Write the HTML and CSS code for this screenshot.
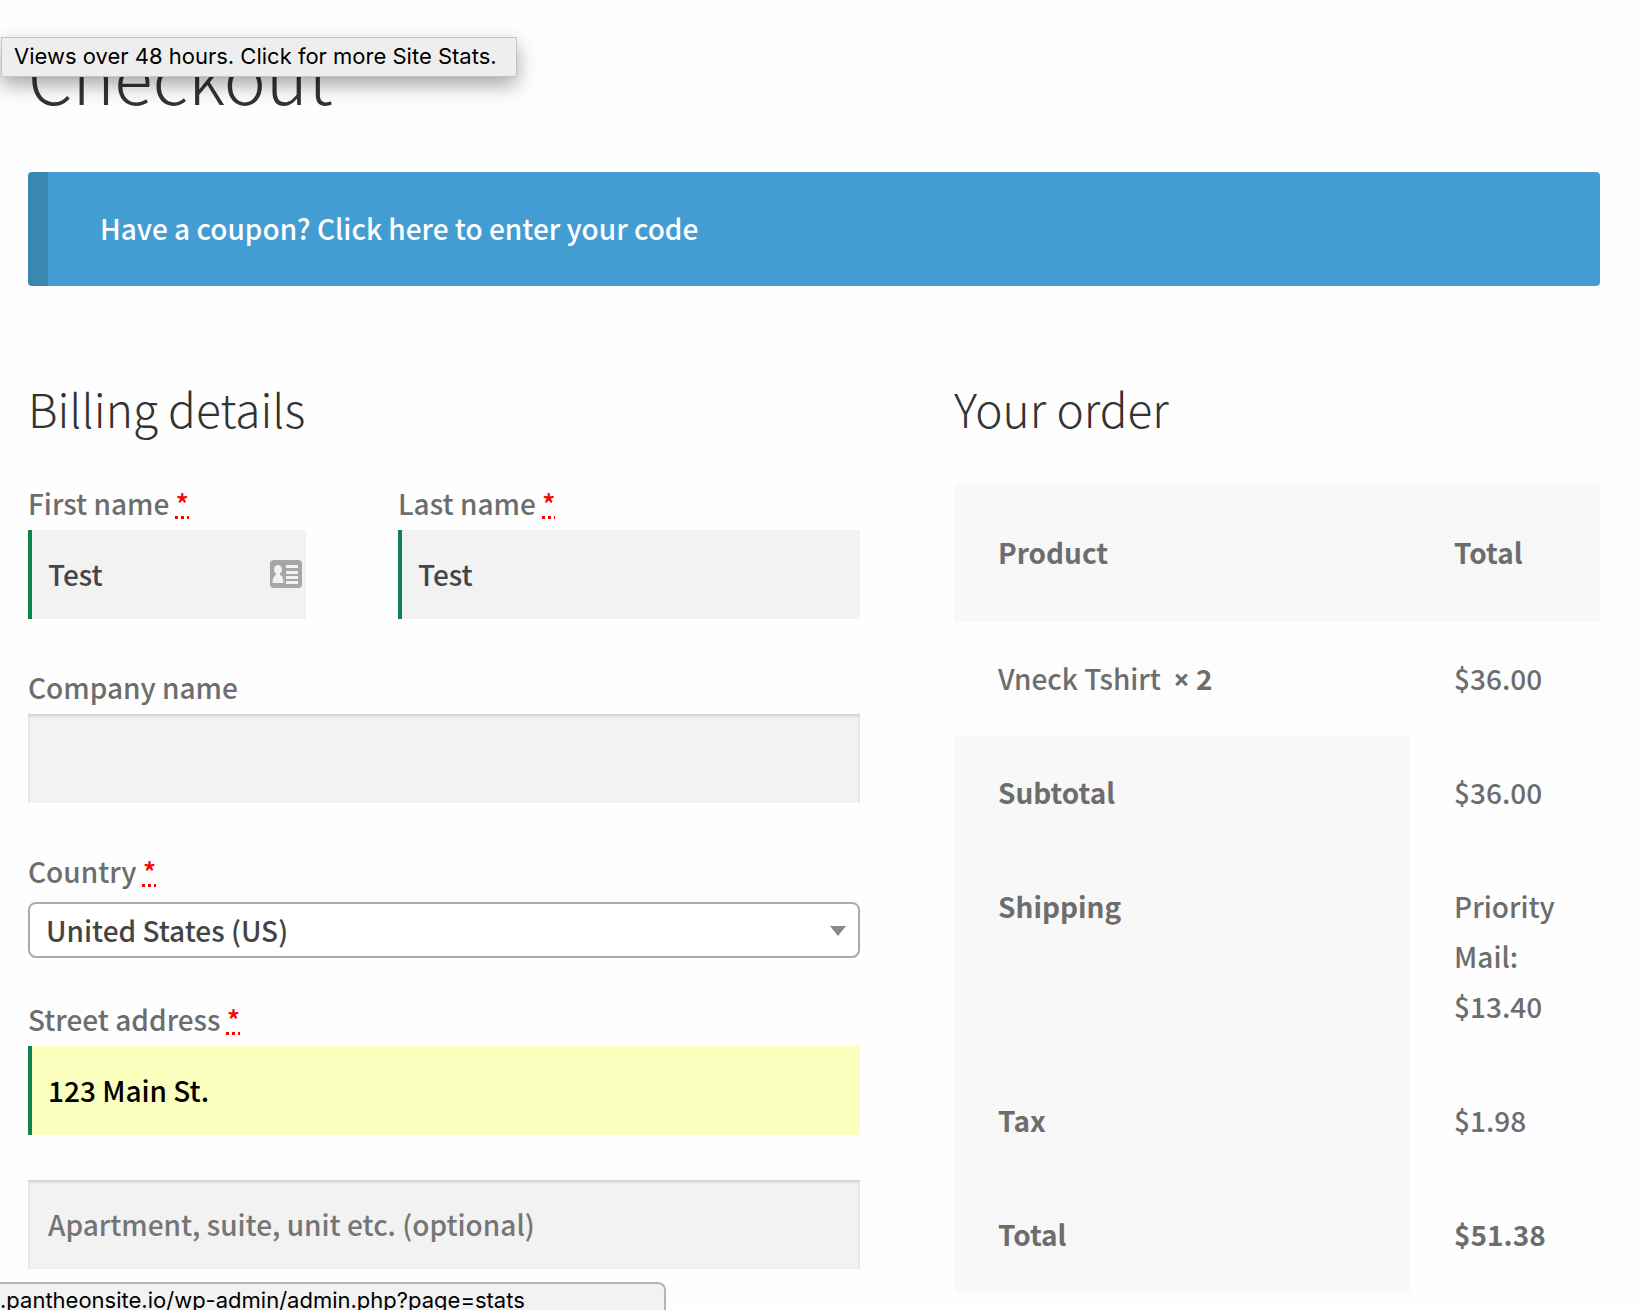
FILE: index.html
```html
<!DOCTYPE html>
<html lang="en">
<head>
<meta charset="utf-8">
<title>Checkout</title>
<link rel="stylesheet" href="styles.css">
</head>
<body>
<main class="page">
  <h1 class="page-title">Checkout</h1>
  <div class="tooltip" role="tooltip">Views over 48 hours. Click for more Site Stats.</div>

  <div class="notice">Have a coupon? <a class="notice-link" href="#coupon">Click here to enter your code</a></div>

  <form class="checkout">
    <section class="billing">
      <h2 class="section-title">Billing details</h2>
      <div class="name-row">
        <div class="field">
          <label class="label" for="first">First name <abbr class="required" title="required">*</abbr></label>
          <div class="control">
            <input class="input input-valid" id="first" type="text" value="Test">
            <svg class="card-icon" viewBox="0 0 32 28" aria-hidden="true">
              <rect width="32" height="28" rx="4" fill="#a6a6a6"/>
              <ellipse cx="8" cy="9.500" rx="4" ry="4.500" fill="#f2f2f2"/>
              <path d="M6 12h4v3c2.500 1 3.500 4 3.500 8h-11c0-4 1-7 3.500-8z" fill="#f2f2f2"/>
              <path d="M16 5h12v3H16zM16 11h12v3H16zM16 16h12v3H16zM16 21h12v3H16z" fill="#f2f2f2"/>
            </svg>
          </div>
        </div>
        <div class="field">
          <label class="label" for="last">Last name <abbr class="required" title="required">*</abbr></label>
          <input class="input input-valid" id="last" type="text" value="Test">
        </div>
      </div>
      <div class="field">
        <label class="label" for="company">Company name</label>
        <input class="input" id="company" type="text">
      </div>
      <div class="field field-select">
        <label class="label" for="country">Country <abbr class="required" title="required">*</abbr></label>
        <div class="control select-control">
          <select class="select" id="country"><option>United States (US)</option></select>
        </div>
      </div>
      <div class="field">
        <label class="label" for="street">Street address <abbr class="required" title="required">*</abbr></label>
        <input class="input input-valid input-autofill" id="street" type="text" value="123 Main St.">
      </div>
      <div class="field">
        <input class="input" type="text" aria-label="Apartment, suite, unit etc." placeholder="Apartment, suite, unit etc. (optional)">
      </div>
    </section>

    <section class="order">
      <h2 class="section-title">Your order</h2>
      <table class="order-table">
        <colgroup><col class="col-product"><col></colgroup>
        <thead>
          <tr><th scope="col">Product</th><th scope="col">Total</th></tr>
        </thead>
        <tbody>
          <tr><td>Vneck Tshirt&nbsp; <strong><span class="times">×</span> 2</strong></td><td>$36.00</td></tr>
        </tbody>
        <tfoot>
          <tr><th scope="row">Subtotal</th><td>$36.00</td></tr>
          <tr><th scope="row">Shipping</th><td>Priority Mail: $13.40</td></tr>
          <tr><th scope="row">Tax</th><td>$1.98</td></tr>
          <tr><th scope="row">Total</th><td><strong>$51.38</strong></td></tr>
        </tfoot>
      </table>
    </section>
  </form>
</main>
<div class="status-bar">.pantheonsite.io/wp-admin/admin.php?page=stats</div>
</body>
</html>
```
FILE: styles.css
```css
* {
  box-sizing: border-box;
}

body {
  margin: 0;
  background: #fefefe;
  color: #6d6d6d;
  font-family: "Noto Sans CJK SC", "Noto Sans", sans-serif;
  font-size: 28px;
  font-weight: 500;
  line-height: 50px;
}

.page {
  position: relative;
  padding: 28px 44px 18px 28px;
}

.page-title,
.section-title {
  margin: 0;
  color: #333;
  font-weight: 300;
}

.page-title {
  margin-bottom: 52px;
  font-size: 71px;
  line-height: 92px;
}

.tooltip {
  position: absolute;
  top: 37px;
  left: 1px;
  padding: 0 19px 2px 12px;
  border: 1px solid #c4c4c4;
  background: #eee;
  box-shadow: 0 8px 20px rgba(0, 0, 0, .35);
  color: #000;
  font-family: Inter, Roboto, sans-serif;
  font-size: 22px;
  font-weight: 400;
  line-height: 36px;
  white-space: nowrap;
}

.notice {
  margin-bottom: 92px;
  padding: 31px 52px 33px;
  border-left: 20px solid #3a87b2;
  border-radius: 4px;
  background: #439dd2;
  color: #fff;
}

.notice-link {
  color: inherit;
  text-decoration: none;
}

.checkout {
  display: grid;
  grid-template-columns: 832fr 646fr;
  column-gap: 94px;
}

.section-title {
  font-size: 46px;
  line-height: 60px;
}

.billing .section-title {
  margin-bottom: 42px;
}

.order .section-title {
  margin-bottom: 46px;
}

.name-row {
  display: grid;
  grid-template-columns: 278fr 462fr;
  column-gap: 92px;
}

.field {
  margin-bottom: 45px;
  min-width: 0;
}

.label {
  display: block;
  margin-bottom: 4px;
  line-height: 46px;
}

.required {
  color: #f00;
  text-decoration: underline dotted 3px;
  text-underline-offset: 1px;
}

.control {
  position: relative;
}

.input {
  display: block;
  width: 100%;
  height: 89px;
  padding: 0 20px 2px;
  border: 0;
  border-radius: 0;
  outline: 0;
  background: #f2f2f2;
  box-shadow: inset 0 2px 3px rgba(0, 0, 0, .15);
  color: #43454b;
  font: inherit;
}

.input::placeholder {
  color: #757575;
  opacity: 1;
}

.input-valid {
  box-shadow: inset 4px 0 #0f834d;
}

.input-autofill {
  background: #faffbd;
  color: #000;
}

.card-icon {
  position: absolute;
  top: 30px;
  right: 4px;
  width: 32px;
  height: 28px;
}

.field-select {
  margin-bottom: 38px;
}

.select-control {
  padding-top: 4px;
}

.select-control::after {
  content: "";
  position: absolute;
  top: 28px;
  right: 14px;
  border: 8px solid transparent;
  border-top: 10px solid #888;
  border-bottom: 0;
  pointer-events: none;
}

.select {
  display: block;
  width: 100%;
  height: 56px;
  padding: 0 40px 0 16px;
  appearance: none;
  border: 2px solid #aaa;
  border-radius: 8px;
  background: #fff;
  color: #444;
  font: inherit;
}

.order-table {
  width: 100%;
  border-collapse: collapse;
  table-layout: fixed;
}

.col-product {
  width: 70.6%;
}

.order-table th,
.order-table td {
  padding: 31px 44px 33px;
  text-align: left;
  vertical-align: top;
}

.order-table th {
  background: #f8f8f8;
  font-weight: 700;
}

.order-table thead th {
  padding-top: 43px;
  padding-bottom: 45px;
}

.order-table tbody td {
  background: #fdfdfd;
}

.times {
  font-family: "Open Sans", "Noto Sans", sans-serif;
  line-height: 1;
}

.status-bar {
  position: fixed;
  bottom: 0;
  left: 0;
  width: 666px;
  height: 28px;
  overflow: hidden;
  border: 2px solid #b4b4b4;
  border-width: 2px 2px 0 0;
  border-top-right-radius: 8px;
  background: #f2f2f2;
  color: #000;
  font-family: Inter, Roboto, sans-serif;
  font-size: 22px;
  font-weight: 400;
  line-height: 32px;
  white-space: nowrap;
}
```
